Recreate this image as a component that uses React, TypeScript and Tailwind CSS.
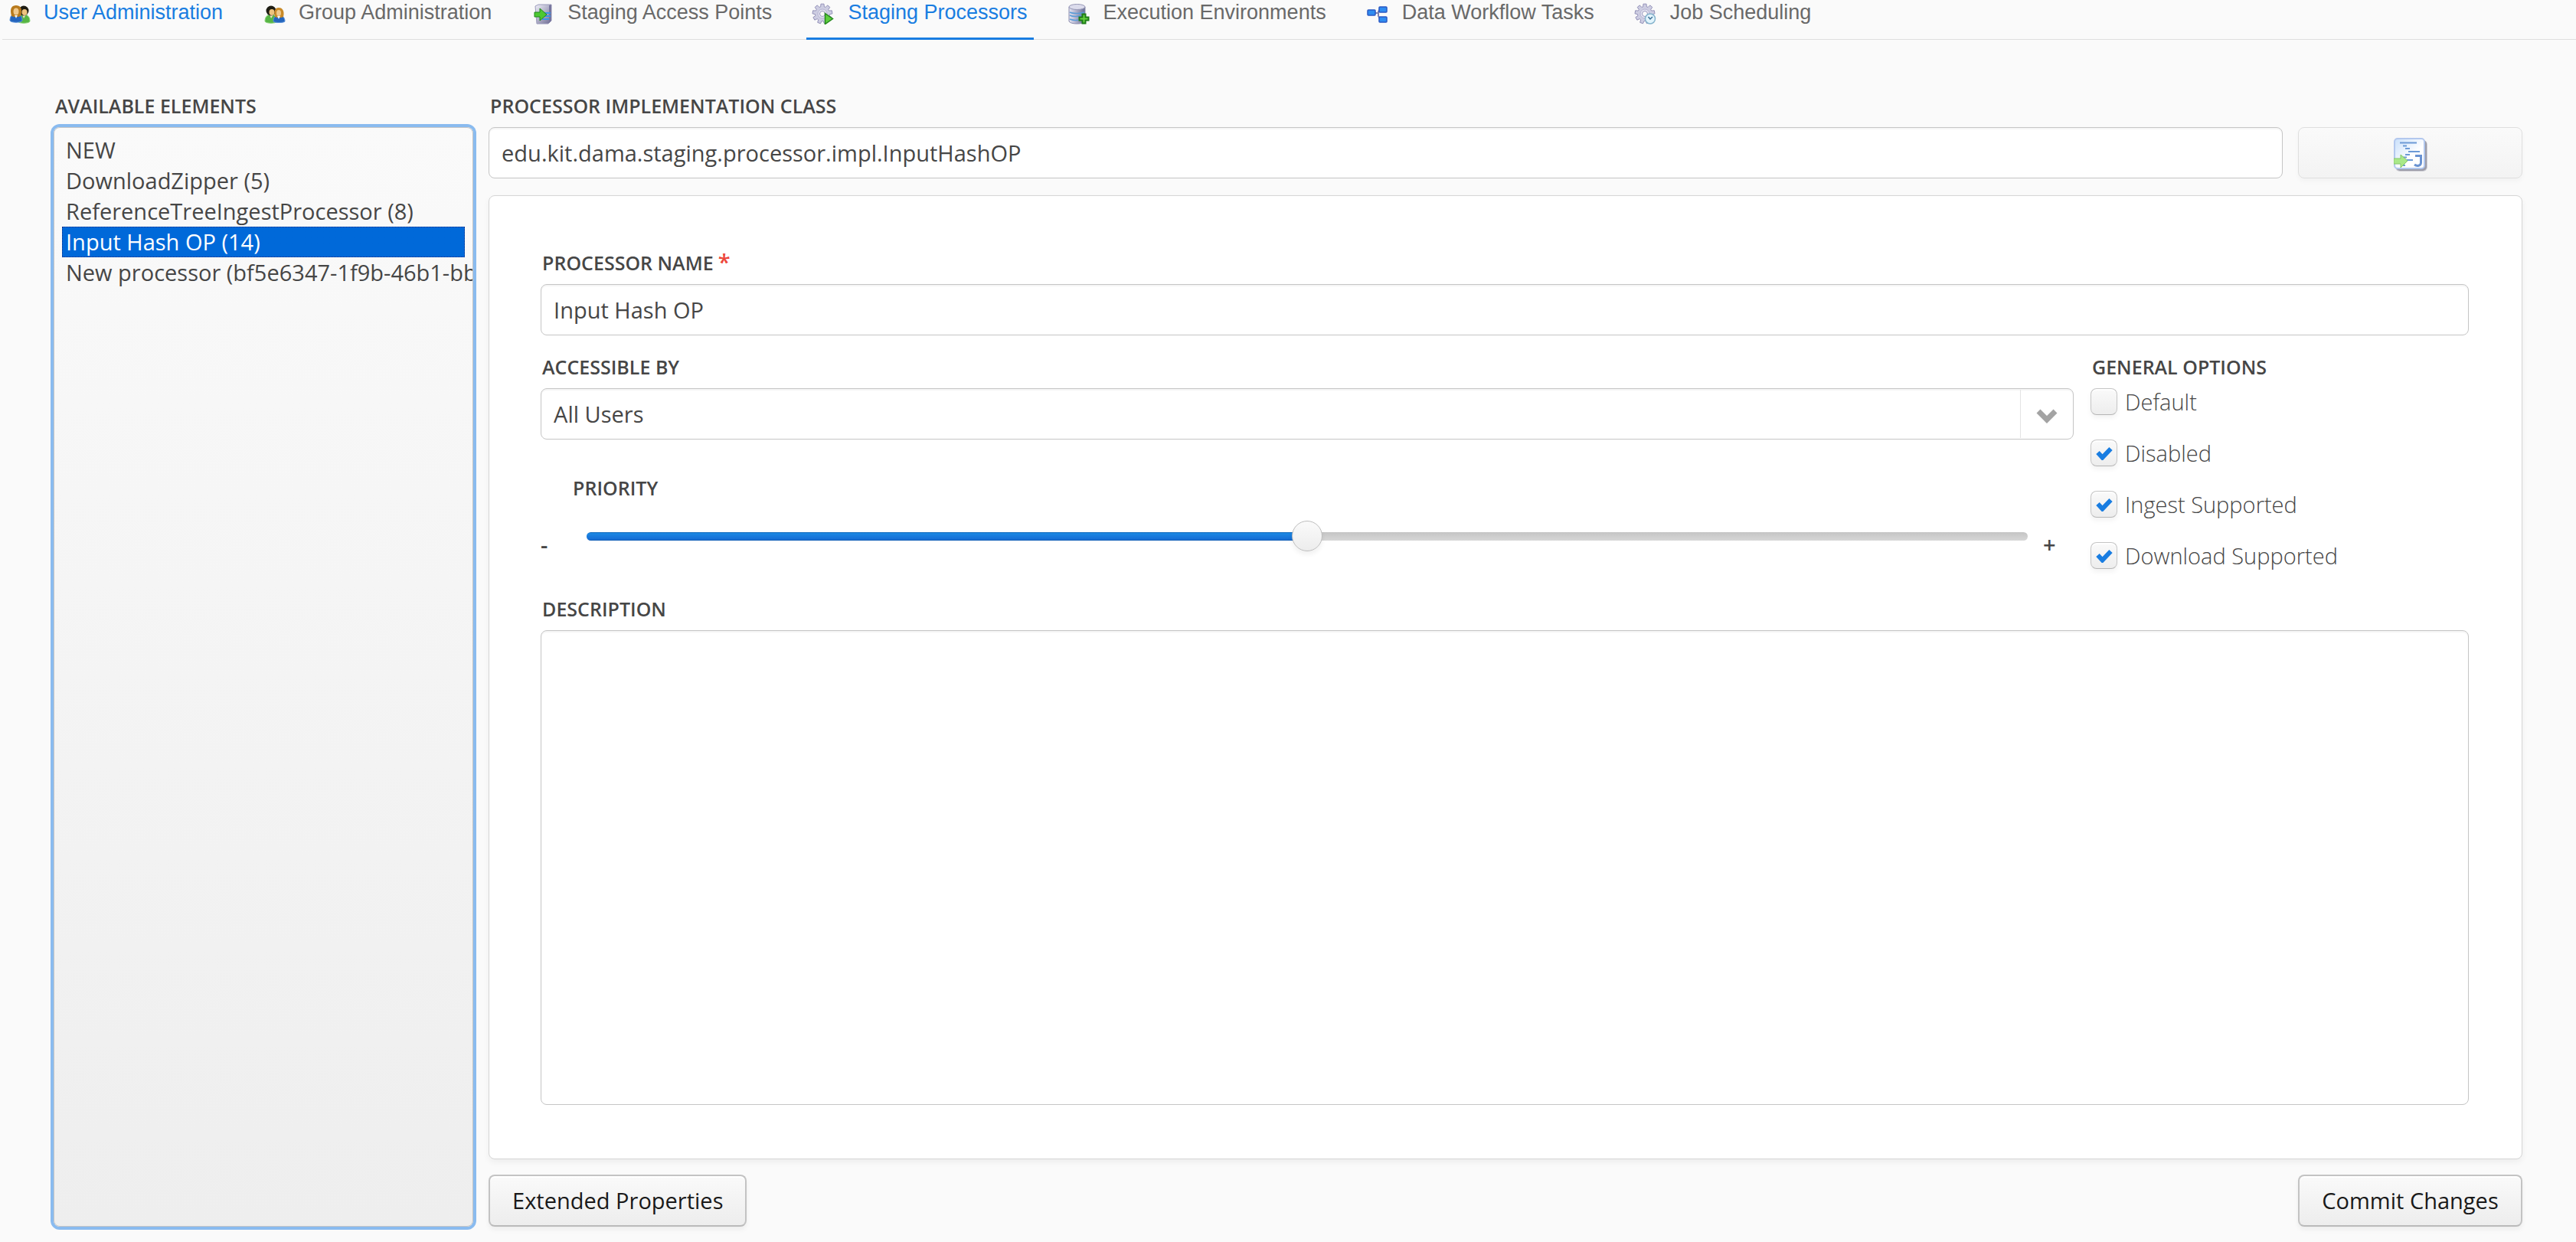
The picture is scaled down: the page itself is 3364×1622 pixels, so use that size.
import { useState } from "react";
import type { CSSProperties, ReactNode } from "react";

const LABEL = "block text-[25px] leading-9 font-semibold text-[#464646] uppercase pl-0.5";
const FIELD =
  "w-full rounded-lg border border-[#c5c5c5] bg-white px-4 text-[29px] text-[#464646] shadow-[inset_0_2px_1px_#f5f5f5] outline-none";
const BUTTON =
  "flex h-[68px] min-w-[293px] items-center justify-center rounded-lg border-2 border-[#c3c3c3] border-b-[#bababa] bg-linear-to-b from-[#fafafa] to-[#ededed] px-[29px] text-[29px] text-[#191919] shadow-[0_4px_6px_rgba(0,0,0,0.05),inset_0_2px_0_#fff]";

function Person({ x, y, hair, shirt, edge }: { x: number; y: number; hair: string; shirt: string; edge: string }) {
  return (
    <g transform={`translate(${x} ${y})`}>
      <path d="M0 21c0-6 3-9 8-9s8 3 8 9c-2 3-14 3-16 0z" fill={shirt} stroke={edge} />
      <path d="M6 12l2 5 3-5z" fill="#f4e3c8" />
      <circle cx="8" cy="7" r="6.5" fill={hair} />
      <ellipse cx="9" cy="9" rx="3.5" ry="4" fill="#eec37e" />
    </g>
  );
}

function UserIcon() {
  return (
    <svg viewBox="0 0 32 32" className="size-8">
      <Person x={14} y={7} hair="#1e1d14" shirt="#57b544" edge="#8ed47c" />
      <g transform="translate(4 6)">
        <path d="M0 21c0-6 3-9 8-9s8 3 8 9c-2 3-14 3-16 0z" fill="#2465bd" stroke="#5b92da" />
        <path d="M2 15C-1 4 3 1 8 1s9 3 6 14l-3 1H5z" fill="#b87a1c" />
        <ellipse cx="8" cy="9" rx="3.500" ry="4.500" fill="#f0c98c" />
        <path d="M6 14l2 4 2-4z" fill="#eef3fb" />
      </g>
    </svg>
  );
}

function GroupIcon() {
  return (
    <svg viewBox="0 0 32 32" className="size-8">
      <Person x={4} y={7} hair="#1e1d14" shirt="#57b544" edge="#8ed47c" />
      <g transform="translate(15 8)">
        <path d="M0 20c0-6 3-8 7-8s8 2 8 8c-2 2-13 2-15 0z" fill="#2465bd" stroke="#5b92da" />
        <path d="M2 14C0 5 3 2 7 2s8 3 6 12l-3 1H5z" fill="#c98a28" />
        <ellipse cx="7" cy="9" rx="3" ry="4" fill="#f0c98c" />
        <path d="M5 13l2 4 2-4z" fill="#eef3fb" />
      </g>
    </svg>
  );
}

function AccessPointIcon() {
  return (
    <svg viewBox="0 0 32 32" className="size-8">
      <defs>
        <linearGradient id="srv" x1="0" x2="1" y1="0" y2="1">
          <stop offset="0" stopColor="#f2f2fa" />
          <stop offset="1" stopColor="#6d6b93" />
        </linearGradient>
      </defs>
      <path d="M6 8l4-2h17v21l-4 4H8z" fill="url(#srv)" stroke="#9a9abb" />
      <path d="M24 7l3-1v21l-3 3z" fill="#77759d" />
      <path d="M15 17h11M15 21h11M15 25h9" stroke="#3c93e6" strokeWidth="2" />
      <path d="M5 16h7v-5l9 8-9 8v-5H5z" fill="#4dc832" stroke="#21871a" />
    </svg>
  );
}

const TEETH = Array.from({ length: 9 }, (_, i) => {
  const at = (offset: number, r: number) => {
    const a = ((i * 40 + offset - 90) * Math.PI) / 180;
    return `${(15 + r * Math.cos(a)).toFixed(2)} ${(18 + r * Math.sin(a)).toFixed(2)}`;
  };
  return [at(-14, 9.5), at(-9, 13), at(9, 13), at(14, 9.5)].join(" L");
}).join(" L");

function Gear() {
  return (
    <g>
      <path d={`M${TEETH}Z`} fill="#cdcde2" stroke="#9391b8" strokeWidth="1" strokeLinejoin="round" />
      <circle cx="15" cy="18" r="6" fill="#e3e3f1" stroke="#b5b4d1" />
      <circle cx="15" cy="18" r="3.500" fill="#fafafa" stroke="#9a98be" />
    </g>
  );
}

function ProcessorIcon() {
  return (
    <svg viewBox="0 0 32 32" className="size-8">
      <Gear />
      <path d="M18.500 17.500l10 7-10 7z" fill="#5dce3d" stroke="#23861b" strokeWidth="1.500" />
    </svg>
  );
}

function EnvironmentIcon() {
  return (
    <svg viewBox="0 0 32 32" className="size-8">
      <defs>
        <linearGradient id="cyl" x1="0" x2="1">
          <stop offset="0" stopColor="#e6e6f2" />
          <stop offset="0.4" stopColor="#b4b4cf" />
          <stop offset="1" stopColor="#666c92" />
        </linearGradient>
      </defs>
      <path d="M3 9v19c2 4 19 4 21 0V9z" fill="url(#cyl)" stroke="#8d8eae" />
      <ellipse cx="13.500" cy="9" rx="10.500" ry="3.500" fill="#dcdcec" stroke="#9697b5" />
      <path d="M4 16c4 2 15 2 19 0M4 20c4 2 11 2 15 0M4 25c3 1 8 2 11 1" fill="none" stroke="#5b9cd8" strokeWidth="1.500" />
      <path d="M20.500 18.500h4v4h4v4h-4v4h-4v-4h-4v-4h4z" fill="#66d13f" stroke="#1d7c16" strokeWidth="2" />
    </svg>
  );
}

function WorkflowIcon() {
  return (
    <svg viewBox="0 0 32 32" className="size-8">
      <path d="M12 17h6M22 12h-3l-2 3v6l3 5h2" fill="none" stroke="#7f83b0" strokeWidth="2" />
      <g fill="#2f8cf0" stroke="#2a58c4" strokeWidth="1.500">
        <rect x="3" y="13" width="10" height="7" rx="1" />
        <rect x="18" y="9" width="10" height="7" rx="1" />
        <rect x="18" y="22" width="10" height="7" rx="1" />
      </g>
    </svg>
  );
}

function JobIcon() {
  return (
    <svg viewBox="0 0 32 32" className="size-8">
      <Gear />
      <circle cx="22" cy="24.500" r="6.500" fill="#e2f4fc" stroke="#86b4cd" strokeWidth="1.500" />
      <path d="M19.500 22l2.500 3 3-3" fill="none" stroke="#3d6f95" strokeWidth="1.500" />
    </svg>
  );
}

function ClassIcon() {
  return (
    <svg viewBox="0 0 44 44" className="size-11">
      <defs>
        <linearGradient id="sheet" x1="0" x2="1" y1="0" y2="1">
          <stop offset="0" stopColor="#c9e0fb" />
          <stop offset="0.600" stopColor="#ffffff" />
        </linearGradient>
      </defs>
      <rect x="2" y="3" width="42" height="41" rx="6" fill="#cfcfd6" />
      <rect x="3" y="3" width="40" height="40" rx="5" fill="#9c9ca8" />
      <rect x="1" y="1" width="39" height="39" rx="4" fill="url(#sheet)" stroke="#b3c8ee" strokeWidth="2" />
      <path
        d="M8 6.500h22M12 10.500h5M15 14h6M19 18h15M15 22h6M12 25.500h5M17 29h8M12 36h3"
        stroke="#6c9ad6"
        strokeWidth="2"
        fill="none"
      />
      <path d="M28 23.500h7.500v9c0 4-5 5-8.500 2.500" fill="none" stroke="#6a93d2" strokeWidth="3" />
      <path d="M0 27h9v-5l9 8-9 9v-5H0z" fill="#a9e889" stroke="#86c76a" />
    </svg>
  );
}

type Tab = { name: string; icon: ReactNode; look: string };

const TAB_IDLE = "border-transparent text-[#696969]";
const TABS: Tab[] = [
  { name: "User Administration", icon: <UserIcon />, look: "border-transparent text-[#197de1]" },
  { name: "Group Administration", icon: <GroupIcon />, look: TAB_IDLE },
  { name: "Staging Access Points", icon: <AccessPointIcon />, look: TAB_IDLE },
  { name: "Staging Processors", icon: <ProcessorIcon />, look: "border-[#197de1] text-[#197de1]" },
  { name: "Execution Environments", icon: <EnvironmentIcon />, look: TAB_IDLE },
  { name: "Data Workflow Tasks", icon: <WorkflowIcon />, look: TAB_IDLE },
  { name: "Job Scheduling", icon: <JobIcon />, look: TAB_IDLE },
];

const ELEMENTS = [
  "NEW",
  "DownloadZipper (5)",
  "ReferenceTreeIngestProcessor (8)",
  "Input Hash OP (14)",
  "New processor (bf5e6347-1f9b-46b1-bb1c-0a7e2d9f4c35)",
];

function Option({ label, checked }: { label: string; checked: boolean }) {
  return (
    <label className="flex h-[35px] items-center gap-2.5 text-[29px] font-light text-[#464646]">
      <span className="relative grid size-[35px] place-items-center">
        <input
          type="checkbox"
          defaultChecked={checked}
          className="peer size-[35px] appearance-none rounded-lg border border-[#c5c5c5] border-b-[#b5b5b5] bg-linear-to-b from-[#fafafa] to-[#ededed] shadow-[0_4px_6px_rgba(0,0,0,0.05),inset_0_2px_0_#fff]"
        />
        <svg viewBox="0 0 22 18" className="pointer-events-none absolute hidden h-[18px] w-[22px] peer-checked:block">
          <path d="M2.500 8l6 6.500L19.500 3" fill="none" stroke="#197de1" strokeWidth="6" strokeLinejoin="miter" />
        </svg>
      </span>
      {label}
    </label>
  );
}

function Priority() {
  const [value, setValue] = useState(50);
  return (
    <div className="mt-[45px] flex items-end text-[29px] leading-9 font-semibold text-[#464646]">
      <span className="w-10">-</span>
      <div className="min-w-0 flex-1">
        <label htmlFor="priority" className={LABEL}>
          Priority
        </label>
        <div className="mt-[25px] mb-[9px] flex h-10 px-5">
          <input
            id="priority"
            type="range"
            value={value}
            onChange={(e) => setValue(Number(e.target.value))}
            style={{ "--fill": `${value}%` } as CSSProperties}
            className="h-10 w-full appearance-none bg-transparent outline-none [&::-webkit-slider-runnable-track]:h-[11px] [&::-webkit-slider-runnable-track]:rounded-md [&::-webkit-slider-runnable-track]:[background:linear-gradient(#1362b1,#1b87e3_15%,#166ed5_85%,#1159ab)_left/var(--fill)_100%_no-repeat,linear-gradient(#c4c4c4,#d7d7d7)] [&::-webkit-slider-thumb]:mt-[-15px] [&::-webkit-slider-thumb]:size-10 [&::-webkit-slider-thumb]:appearance-none [&::-webkit-slider-thumb]:rounded-full [&::-webkit-slider-thumb]:border [&::-webkit-slider-thumb]:border-[#bdbdbd] [&::-webkit-slider-thumb]:bg-linear-to-b [&::-webkit-slider-thumb]:from-[#fafafa] [&::-webkit-slider-thumb]:to-[#ededed] [&::-webkit-slider-thumb]:shadow-[0_4px_6px_rgba(0,0,0,0.06)]"
          />
        </div>
      </div>
      <span className="w-10">+</span>
    </div>
  );
}

export default function App() {
  return (
    <div className="flex min-h-screen flex-col bg-[#fafafa] font-['Open_Sans',sans-serif]">
      <nav className="ml-[3px] flex h-[52px] items-start border-b border-[#dfdfdf] font-['Liberation_Sans',sans-serif] text-[27px]">
        {TABS.map((tab) => (
          <a
            key={tab.name}
            href="#"
            className={`mr-[37px] flex h-[52px] shrink-0 items-start gap-4 border-b-[3px] pr-2 pl-[6px] leading-8 whitespace-nowrap ${tab.look}`}
          >
            {tab.icon}
            {tab.name}
          </a>
        ))}
      </nav>

      <main className="grid flex-1 grid-cols-[17%_minmax(0,1fr)] gap-x-5 px-[70px] pt-[68px] pb-5">
        <section className="flex min-w-0 flex-col">
          <label htmlFor="elements" className={LABEL}>
            Available Elements
          </label>
          <select
            id="elements"
            size={5}
            defaultValue="Input Hash OP (14)"
            className="mt-2.5 w-full flex-1 overflow-hidden rounded-lg border border-[#c5c5c5] bg-linear-to-b from-[#fafafa] to-[#eeeeee] px-2.5 py-[9px] text-[29px] text-[#464646] ring-4 ring-[#8abbef] outline-none"
          >
            {ELEMENTS.map((name) => (
              <option
                key={name}
                className="h-10 px-[5px] py-0 leading-10 -outline-offset-1 outline-[#0a2f8a] checked:bg-[#0069d9] checked:bg-linear-to-b checked:from-[#0069d9] checked:to-[#0069d9] checked:text-white checked:outline-1 checked:outline-dotted"
              >
                {name}
              </option>
            ))}
          </select>
        </section>

        <section className="flex min-w-0 flex-col">
          <label htmlFor="impl" className={LABEL}>
            Processor Implementation Class
          </label>
          <div className="mt-2.5 flex gap-5">
            <input
              id="impl"
              defaultValue="edu.kit.dama.staging.processor.impl.InputHashOP"
              className={`h-[67px] min-w-0 flex-1 ${FIELD}`}
            />
            <button
              type="button"
              aria-label="Load class"
              className="flex h-[67px] w-[293px] items-center justify-center rounded-lg border border-[#dfdfdf] bg-linear-to-b from-[#fafafa] to-[#f3f3f3] pt-1 shadow-[0_4px_6px_rgba(0,0,0,0.03)]"
            >
              <ClassIcon />
            </button>
          </div>

          <div className="mt-[22px] flex flex-1 flex-col rounded-lg border border-[#d5d5d5] bg-white pt-[69px] pr-[69px] pb-[70px] pl-[67px] shadow-[0_4px_8px_rgba(0,0,0,0.05)]">
            <label htmlFor="name" className={LABEL}>
              Processor Name<span className="pl-1.5 text-[29px] leading-none text-[#ed473b]">*</span>
            </label>
            <input id="name" defaultValue="Input Hash OP" className={`mt-2.5 h-[67px] ${FIELD}`} />

            <div className="mt-[23px] grid grid-cols-[minmax(0,1fr)_494px] gap-x-[22px]">
              <div>
                <label htmlFor="access" className={LABEL}>
                  Accessible By
                </label>
                <div className="relative mt-2.5">
                  <select id="access" className={`h-[67px] appearance-none ${FIELD}`}>
                    <option>All Users</option>
                  </select>
                  <span className="pointer-events-none absolute inset-y-0.5 right-px grid w-[69px] place-items-center border-l border-[#e4e4e4]">
                    <svg viewBox="0 0 28 20" className="mt-1 h-5 w-7">
                      <path d="M3 4l11 11L25 4" fill="none" stroke="#a3a3a3" strokeWidth="7" />
                    </svg>
                  </span>
                </div>
                <Priority />
              </div>
              <fieldset>
                <legend className={LABEL}>General Options</legend>
                <div className="mt-2.5 flex flex-col gap-8">
                  <Option label="Default" checked={false} />
                  <Option label="Disabled" checked />
                  <Option label="Ingest Supported" checked />
                  <Option label="Download Supported" checked />
                </div>
              </fieldset>
            </div>

            <label htmlFor="description" className={`mt-[34px] ${LABEL}`}>
              Description
            </label>
            <textarea id="description" className={`mt-2.5 flex-1 resize-none py-3 ${FIELD}`} />
          </div>

          <div className="mt-5 flex justify-between">
            <button type="button" className={BUTTON}>
              Extended Properties
            </button>
            <button type="button" className={BUTTON}>
              Commit Changes
            </button>
          </div>
        </section>
      </main>
    </div>
  );
}
